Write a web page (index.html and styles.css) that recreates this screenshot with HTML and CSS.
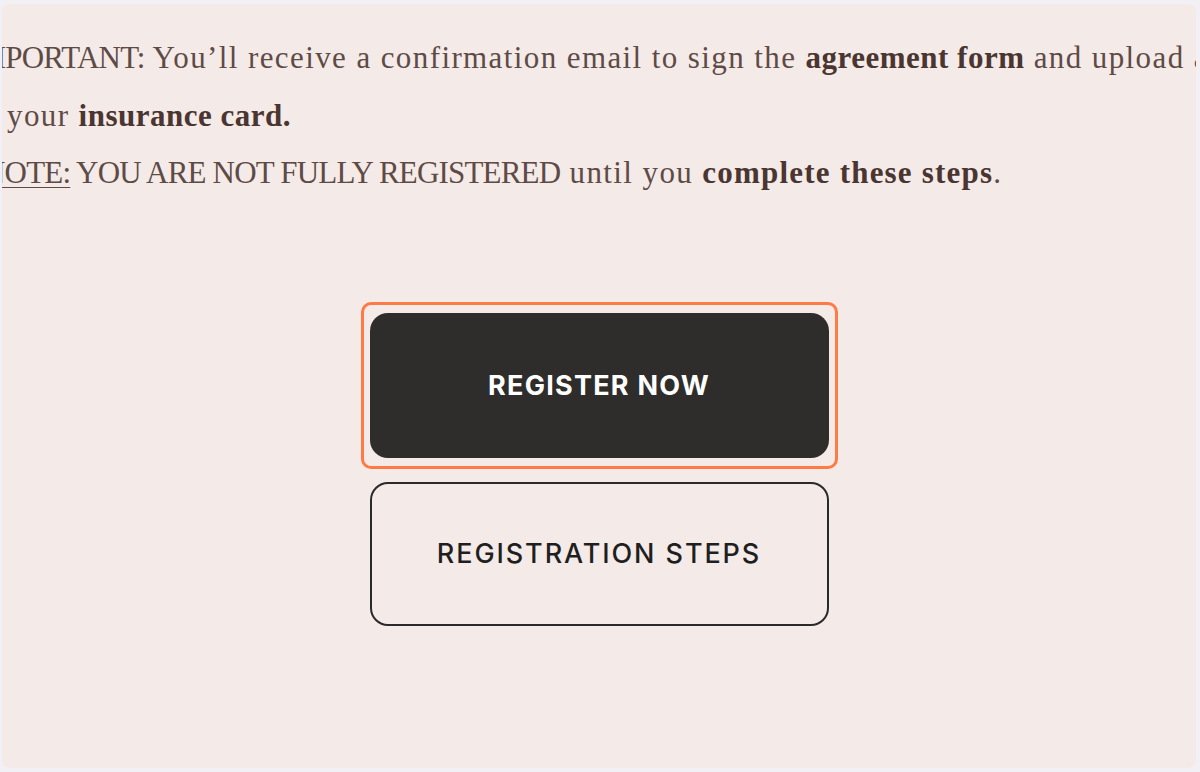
FILE: index.html
```html
<!DOCTYPE html>
<html lang="en">
<head>
<meta charset="utf-8">
<title>Register</title>
<link rel="stylesheet" href="styles.css">
</head>
<body>
<div class="panel">
  <div class="notes">
    <div class="line line-1"><span class="caps">IMPORTANT:</span> You’ll receive a confirmation email to sign the <b>agreement form</b> and upload a photo of</div>
    <div class="line line-2">your <b>insurance card.</b></div>
    <div class="line line-3"><span class="caps"><u>NOTE:</u> YOU ARE NOT FULLY REGISTERED</span> until you <b class="wide">complete these steps</b>.</div>
  </div>
  <div class="actions">
    <div class="focus-ring">
      <a class="btn btn-primary" href="#">REGISTER NOW</a>
    </div>
    <a class="btn btn-outline" href="#">REGISTRATION STEPS</a>
  </div>
</div>
</body>
</html>
```

FILE: styles.css
```css
html, body {
  margin: 0;
  padding: 0;
}
body {
  background: #f2f0f5;
  width: 1200px;
  height: 772px;
  overflow: hidden;
  padding: 4px 4px 4px 2px;
  box-sizing: border-box;
}
.panel {
  height: 764px;
  background: #f4eae8;
  border-radius: 8px;
  overflow: hidden;
  box-sizing: border-box;
}
.notes {
  padding-top: 25px;
  font-family: "Liberation Serif", "Times New Roman", serif;
  font-size: 31px;
  line-height: 57.5px;
  color: #5e4b46;
  letter-spacing: 1.4px;
}
.notes b {
  font-weight: 700;
  color: #4a3530;
  letter-spacing: 0.5px;
}
.notes b.wide {
  letter-spacing: 1.2px;
}
.notes .caps {
  letter-spacing: -0.8px;
}
.notes u {
  text-decoration-thickness: 1px;
  text-underline-offset: 4px;
}
.line {
  white-space: nowrap;
}
.line-1 { margin-left: -33px; }
.line-2 { margin-left: 5px; }
.line-3 { margin-left: -19px; }
.actions {
  margin-top: 100px;
  display: flex;
  flex-direction: column;
  align-items: center;
  gap: 13px;
}
.focus-ring {
  border: 3px solid #ff7a45;
  border-radius: 10px;
  padding: 8px 6px;
}
.btn {
  display: flex;
  align-items: center;
  justify-content: center;
  width: 459px;
  height: 145px;
  box-sizing: border-box;
  border-radius: 18px;
  text-decoration: none;
  font-family: "Inter", "Liberation Sans", sans-serif;
  font-size: 27px;
}
.btn-primary {
  background: #2f2d2c;
  color: #ffffff;
  font-weight: 700;
  letter-spacing: 1.25px;
}
.btn-outline {
  height: 144px;
  border: 2px solid #2b2a2a;
  color: #1f1f1f;
  font-weight: 500;
  letter-spacing: 1.9px;
}
```
